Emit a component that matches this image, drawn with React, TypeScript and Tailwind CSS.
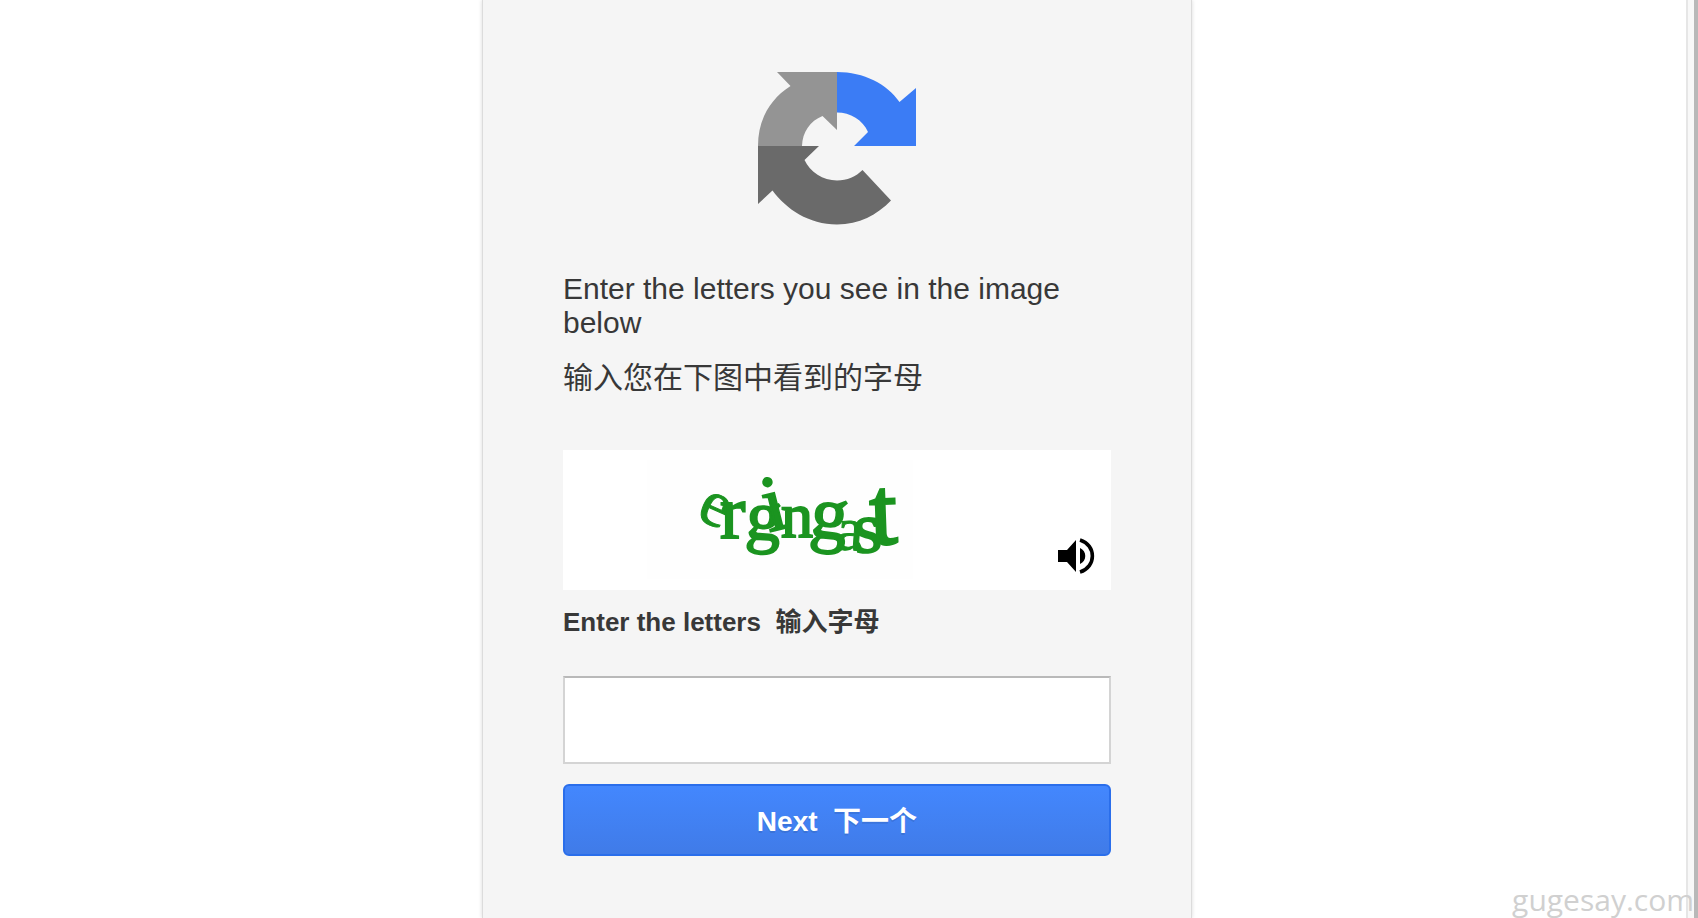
import { useState } from "react";

type Glyph = { char: string; x: number; y: number; size: number; rotate: number; stroke: number };

const glyphs: Glyph[] = [
  { char: "e", x: 50, y: 68, size: 66, rotate: 24, stroke: 1 },
  { char: "r", x: 75, y: 88, size: 76, rotate: 0, stroke: 2 },
  { char: "g", x: 100, y: 88, size: 70, rotate: 4, stroke: 2 },
  { char: "i", x: 124, y: 82, size: 80, rotate: -14, stroke: 2 },
  { char: "n", x: 136, y: 87, size: 64, rotate: 0, stroke: 2 },
  { char: "g", x: 164, y: 86, size: 74, rotate: 6, stroke: 2 },
  { char: "a", x: 190, y: 99, size: 62, rotate: 4, stroke: 1 },
  { char: "s", x: 210, y: 103, size: 72, rotate: -4, stroke: 2 },
  { char: "t", x: 226, y: 94, size: 96, rotate: -2, stroke: 3 },
];

function Logo() {
  return (
    <svg viewBox="0 0 160 154" className="h-[154px] w-[160px]" aria-hidden="true">
      <path fill="#949494" d="M20 1H80V59L65.500 45C53 50 45.500 61 45 75H1C1 49 13 28 33.500 15Z" />
      <path fill="#3b7cf5" d="M80 1C107 1 130 13 142.500 31L159 17V75H97L111 61C106 49 93 41.500 80 41.500Z" />
      <path fill="#6a6a6a" d="M1 75H62L47.500 89C53 101 66 109.500 80 109.500C90 109.500 99 105.500 105.500 99L134 129.500C120 144 102 153.500 80 153.500C52 153.500 29 138 15.500 119.500L1 133Z" />
    </svg>
  );
}

function Challenge() {
  return (
    <svg viewBox="0 0 280 140" className="h-[140px] w-[280px]" role="img" aria-label="ergingast">
      <rect x="2" y="10" width="266" height="119" fill="#fefefe" />
      <text fill="#1b9420" stroke="#1b9420" fontFamily="'Liberation Serif', serif">
        {glyphs.map((g, i) => (
          <tspan key={i} x={g.x} y={g.y} fontSize={g.size} strokeWidth={g.stroke} rotate={g.rotate}>
            {g.char}
          </tspan>
        ))}
      </text>
    </svg>
  );
}

function SpeakerIcon() {
  return (
    <svg viewBox="0 0 38 38" className="h-[38px] w-[38px]" aria-hidden="true">
      <path d="M1 13H10L19 3V35L10 25H1Z" />
      <path d="M23 11C30 14 30 24 23 27Z" />
      <path d="M23 3C39.500 8 39.500 30 23 35" fill="none" stroke="#000" strokeWidth="3.600" />
    </svg>
  );
}

export default function App() {
  const [letters, setLetters] = useState("");
  return (
    <div className="relative flex min-h-screen overflow-hidden bg-white font-['Liberation_Sans','Noto_Sans_CJK_SC',sans-serif] text-[#383838]">
      <main className="flex flex-1 justify-center pr-3">
        <form
          className="flex w-full max-w-[710px] flex-col border-x border-[#dcdcdc] bg-[#f5f5f5] px-20 pt-[71px] pb-[58px] shadow-[0_0_4px_rgba(0,0,0,0.15)]"
          onSubmit={(e) => e.preventDefault()}
        >
          <div className="flex justify-center">
            <Logo />
          </div>
          <h1 className="mt-[47px] text-[30px] leading-[34px]">Enter the letters you see in the image below</h1>
          <p className="mt-4 text-[30px] leading-[44px]" lang="zh-CN">输入您在下图中看到的字母</p>

          <div className="mt-[50px] flex h-[140px] items-end justify-between bg-white pr-4 pl-[82px]">
            <Challenge />
            <button type="button" aria-label="Play audio" className="mb-[15px]">
              <SpeakerIcon />
            </button>
          </div>

          <label htmlFor="letters" className="mt-3 text-[26px] leading-10 font-bold">
            Enter the letters&nbsp; <span lang="zh-CN">输入字母</span>
          </label>
          <input
            id="letters"
            type="text"
            autoComplete="off"
            value={letters}
            onChange={(e) => setLetters(e.target.value)}
            className="mt-[34px] h-[88px] w-full border-2 border-[#d4d4d4] border-t-[#b9b9b9] bg-white px-4 text-[30px] outline-none focus:border-[#4d90fe]"
          />
          <button
            type="submit"
            className="mt-5 h-[72px] w-full rounded-md border-2 border-[#2a6eeb] bg-linear-to-b from-[#4387fe] to-[#407be8] pt-1 text-[28px] leading-10 font-bold text-white [text-shadow:0_2px_0_rgba(0,0,0,0.1)]"
          >
            Next&nbsp; <span lang="zh-CN">下一个</span>
          </button>
        </form>
      </main>
      <div className="w-3 border-r-4 border-l-2 border-r-[#b8b8b8] border-l-[#e6e6e6] bg-[#f8f8f8]" />
      <span className="absolute right-1 bottom-0 font-['Open_Sans',sans-serif] text-[30px] leading-9 text-[#d0d0d0]">gugesay.com</span>
    </div>
  );
}
